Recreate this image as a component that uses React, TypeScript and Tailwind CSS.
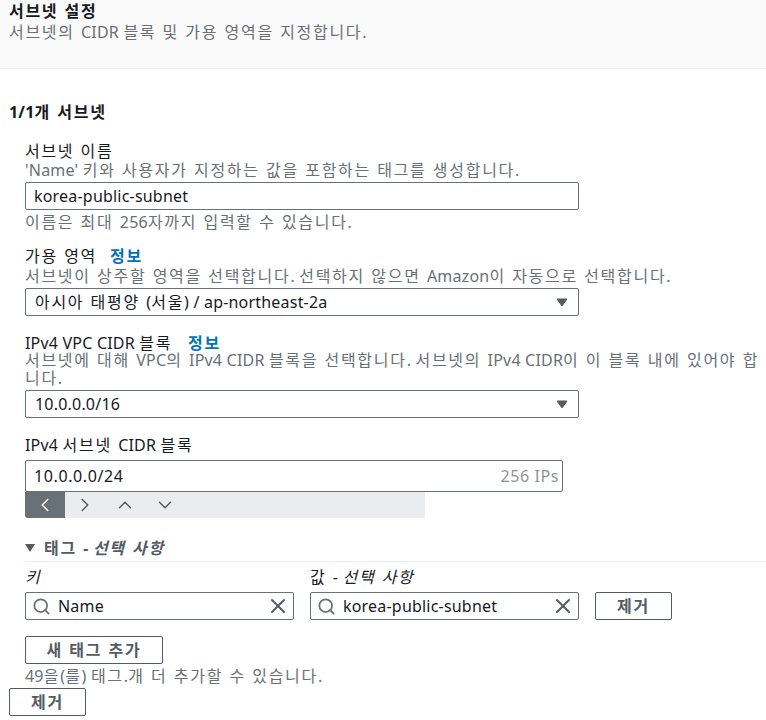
import { ChevronDown, ChevronLeft, ChevronRight, ChevronUp, Search, X } from 'lucide-react';

const font = 'font-["Noto_Sans","Noto_Sans_CJK_KR",sans-serif]';

// hangul in the reference runs wider than Noto CJK, so those runs get extra tracking
function T({ children }: { children: string }) {
  const parts = children.split(/([\uAC00-\uD7A3][\uAC00-\uD7A3 ]*)/).filter(Boolean);
  return (
    <>
      {parts.map((part, i) =>
        /[\uAC00-\uD7A3]/.test(part) ? (
          <span key={i} className="tracking-[1.7px] [word-spacing:0.5px]">{part}</span>
        ) : (
          <span key={i} className="tracking-[0.2px]">{part}</span>
        ),
      )}
    </>
  );
}

function Caret() {
  return (
    <svg width="12" height="9" viewBox="0 0 12 9" className="shrink-0">
      <path d="M1 1h10L6 8z" fill="#545b64" stroke="#545b64" strokeLinejoin="round" />
    </svg>
  );
}

function Select({ value }: { value: string }) {
  return (
    <div className="flex items-center justify-between w-[554px] h-[28px] pl-[9px] pr-[10px] bg-white border border-[#687078] rounded-[2px] text-[#16191f]">
      <span className="tracking-[0.4px]"><T>{value}</T></span>
      <Caret />
    </div>
  );
}

function Info({ className }: { className: string }) {
  return <span className={`text-[#0073bb] font-semibold ${className}`}><T>정보</T></span>;
}

function TagInput({ value }: { value: string }) {
  return (
    <div className="flex items-center w-[269px] h-[28px] pl-[6px] pr-[3px] bg-white border border-[#687078] rounded-[2px] text-[#16191f]">
      <Search size={19} strokeWidth={2.2} className="text-[#687078] shrink-0" />
      <span className="ml-[7px] flex-1"><T>{value}</T></span>
      <X size={24} strokeWidth={2} className="text-[#545b64] shrink-0" />
    </div>
  );
}

function Btn({ children, className }: { children: string; className: string }) {
  return (
    <button className={`h-[28px] flex items-center justify-center bg-white border border-[#545b64] rounded-[2px] text-[#545b64] text-[16px] font-bold ${className}`}>
      <T>{children}</T>
    </button>
  );
}

export default function App() {
  return (
    <div className={`w-[766px] h-[720px] overflow-hidden bg-white text-[16px] ${font}`}>
      {/* Header */}
      <div className="h-[69px] bg-[#fafafa] border-b border-[#eaeded] pl-[9px]">
        <h2 className="leading-[20px] font-bold text-[#16191f] pt-px"><T>서브넷 설정</T></h2>
        <p className="leading-[20px] text-[#687078] mt-px"><T>서브넷의 CIDR 블록 및 가용 영역을 지정합니다.</T></p>
      </div>

      <div className="pl-[9px] pt-[33px]">
        <h3 className="leading-[20px] font-bold text-[#16191f]"><T>1/1개 서브넷</T></h3>

        <div className="pl-[16px] pt-[19px]">
          {/* Name */}
          <div className="leading-[20px] text-[#16191f]"><T>서브넷 이름</T></div>
          <div className="leading-[18px] text-[#687078] whitespace-nowrap"><T>'Name' 키와 사용자가 지정하는 값을 포함하는 태그를 생성합니다.</T></div>
          <div className="flex items-center w-[554px] h-[28px] mt-[3px] pl-[8px] bg-white border border-[#687078] rounded-[2px] text-[#16191f]"><T>korea-public-subnet</T></div>
          <div className="leading-[20px] text-[#687078] mt-[2px]"><T>이름은 최대 256자까지 입력할 수 있습니다.</T></div>

          {/* Availability zone */}
          <div className="leading-[20px] text-[#16191f] mt-[14px]"><T>가용 영역</T><Info className="ml-[13px]" /></div>
          <div className="leading-[18px] text-[#687078] mt-px mb-[3px] whitespace-nowrap"><T>서브넷이 상주할 영역을 선택합니다. 선택하지 않으면 Amazon이 자동으로 선택합니다.</T></div>
          <Select value="아시아 태평양 (서울) / ap-northeast-2a" />

          {/* VPC CIDR */}
          <div className="leading-[20px] text-[#16191f] mt-[17px]"><T>IPv4 VPC CIDR 블록</T><Info className="ml-[16px]" /></div>
          <div className="w-[735px] leading-[18px] text-[#687078] -mt-[2px] mb-[3px] break-all"><T>서브넷에 대해 VPC의 IPv4 CIDR 블록을 선택합니다. 서브넷의 IPv4 CIDR이 이 블록 내에 있어야 합니다.</T></div>
          <Select value="10.0.0.0/16" />

          {/* Subnet CIDR */}
          <div className="leading-[20px] text-[#16191f] mt-[17px]"><T>IPv4 서브넷 CIDR 블록</T></div>
          <div className="flex items-center justify-between w-[538px] h-[32px] mt-[5px] pl-[8px] pr-[3px] bg-white border border-[#687078] rounded-[2px] tracking-[0.6px]">
            <span className="text-[#16191f]">10.0.0.0/24</span>
            <span className="text-[#879596]">256 IPs</span>
          </div>
          <div className="flex w-[400px] h-[26px] bg-[#eaeded] rounded-b-[3px] overflow-hidden">
            <div className="w-[40px] flex items-center justify-center bg-[#687078] text-white"><ChevronLeft size={22} strokeWidth={1.6} /></div>
            <div className="w-[40px] flex items-center justify-center text-[#545b64]"><ChevronRight size={22} strokeWidth={1.6} /></div>
            <div className="w-[40px] flex items-center justify-center text-[#545b64]"><ChevronUp size={22} strokeWidth={1.6} /></div>
            <div className="w-[40px] flex items-center justify-center text-[#545b64]"><ChevronDown size={22} strokeWidth={1.6} /></div>
          </div>

          {/* Tags */}
          <div className="flex items-center gap-[9px] mt-[20px] h-[20px] font-bold text-[#545b64]">
            <svg width="10" height="8" viewBox="0 0 10 8" className="shrink-0"><path d="M0 0h10L5 8z" fill="#545b64" /></svg>
            <span><T>태그 - </T><span className="italic font-semibold"><T>선택 사항</T></span></span>
          </div>
          <div className="h-px bg-[#eaeded] mt-[3px] w-[741px]" />
          <div className="flex gap-[16px] mt-[5px] leading-[20px] text-[#16191f]">
            <span className="w-[269px] italic"><T>키</T></span>
            <span><T>값 - </T><span className="italic"><T>선택 사항</T></span></span>
          </div>
          <div className="flex gap-[16px] mt-[5px]">
            <TagInput value="Name" />
            <TagInput value="korea-public-subnet" />
            <Btn className="w-[77px]">제거</Btn>
          </div>
          <Btn className="w-[138px] mt-[16px]">새 태그 추가</Btn>
          <div className="leading-[20px] text-[#687078] mt-[2px]"><T>49을(를) 태그.개 더 추가할 수 있습니다.</T></div>
        </div>
        <Btn className="w-[77px] mt-[2px]">제거</Btn>
      </div>
    </div>
  );
}
